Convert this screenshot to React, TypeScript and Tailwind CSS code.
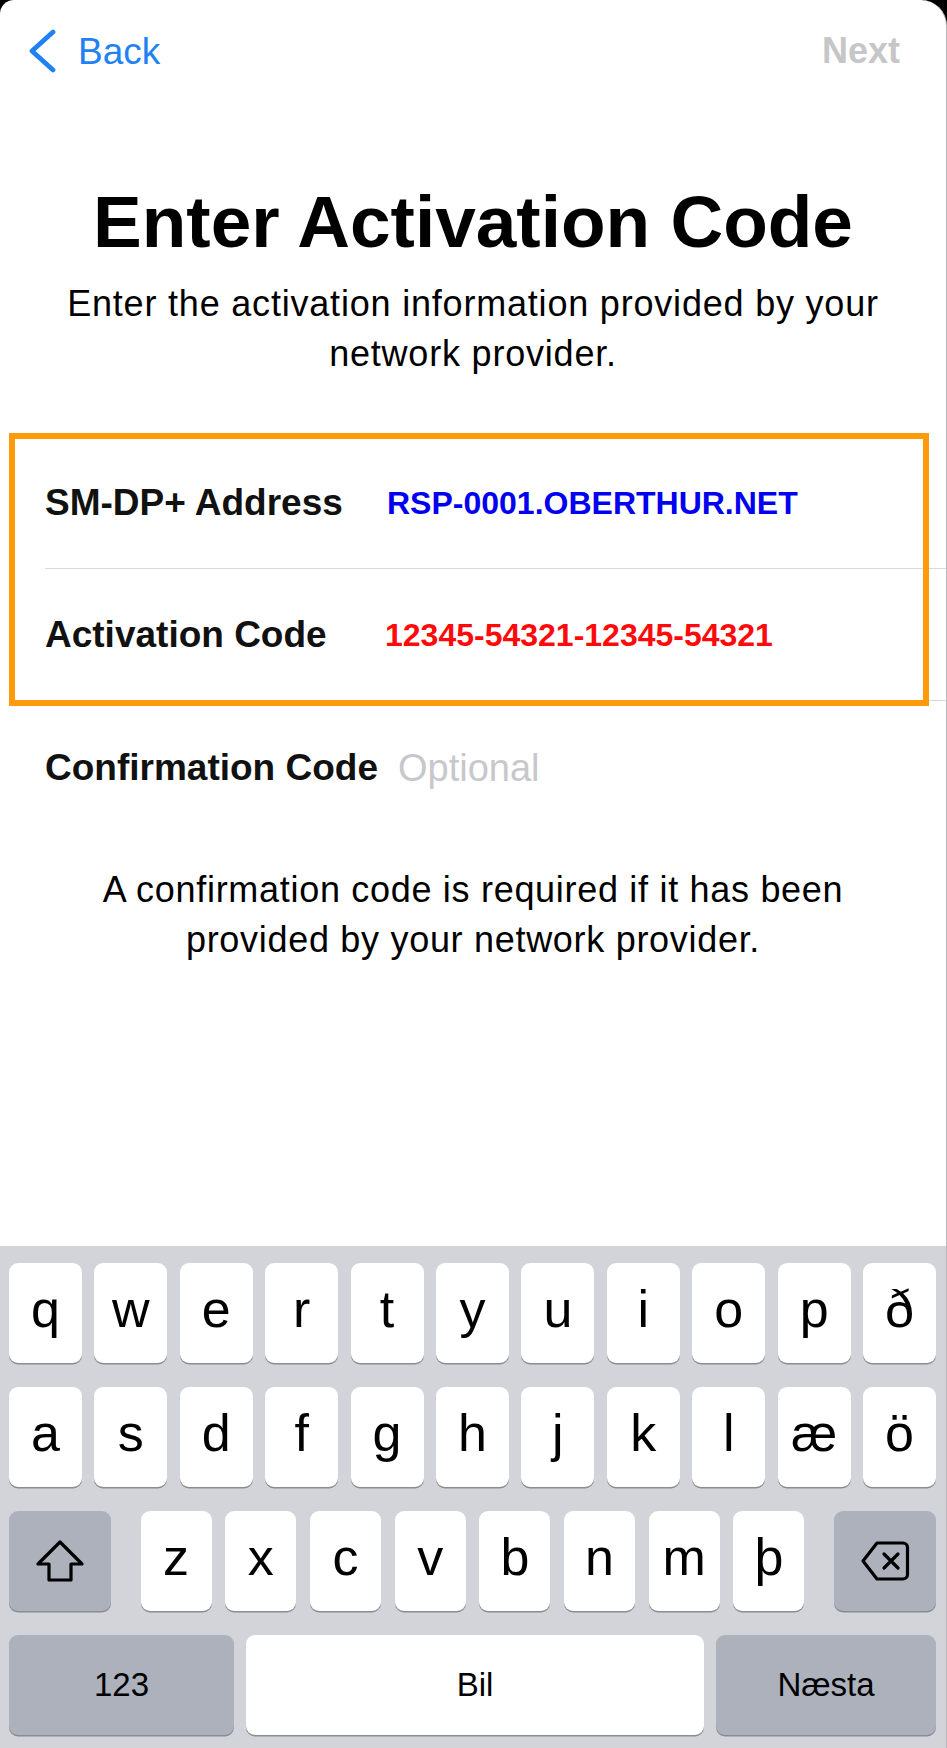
import React from "react";

const row1 = ["q", "w", "e", "r", "t", "y", "u", "i", "o", "p", "ð"];
const row2 = ["a", "s", "d", "f", "g", "h", "j", "k", "l", "æ", "ö"];
const row3 = ["z", "x", "c", "v", "b", "n", "m", "þ"];

const Key: React.FC<{ label: string; className?: string }> = ({ label, className = "" }) => (
  <div
    className={`h-[100px] rounded-[9px] bg-white shadow-[0_1.5px_0_#898c93] flex items-center justify-center pb-[8px] text-[52px] text-black ${className}`}
  >
    {label}
  </div>
);

const ShiftIcon = () => (
  <svg width="50" height="44" viewBox="0 0 50 44" fill="none">
    <path
      d="M25 3 L47 25 H36 V41 H14 V25 H3 Z"
      stroke="#000"
      strokeWidth="3.2"
      strokeLinejoin="round"
    />
  </svg>
);

const DeleteIcon = () => (
  <svg width="50" height="42" viewBox="0 0 50 42" fill="none">
    <path
      d="M17 3 H43 a4.5 4.5 0 0 1 4.5 4.5 V34.5 a4.5 4.5 0 0 1 -4.5 4.5 H17 L3 21 Z"
      stroke="#000"
      strokeWidth="3.2"
      strokeLinejoin="round"
    />
    <path d="M24 14 L38 28 M38 14 L24 28" stroke="#000" strokeWidth="3.2" strokeLinecap="round" />
  </svg>
);

export default function App() {
  return (
    <div className="w-[947px] h-[1748px] bg-black font-['Liberation_Sans',Arial,sans-serif]">
      <div className="h-full flex flex-col bg-white rounded-tl-[14px] rounded-tr-[26px] overflow-hidden border-r border-[#b9b9bb]">
        {/* form area */}
        <div className="relative h-[1246px] shrink-0">
          <div className="h-[102px] flex items-center justify-between pl-[29px] pr-[46px]">
            <div className="flex items-center gap-[22px] text-[#1f82f2]">
              <svg width="27" height="44" viewBox="0 0 27 44" fill="none">
                <path
                  d="M24 3 L3 22 L24 41"
                  stroke="#1f82f2"
                  strokeWidth="4.8"
                  strokeLinecap="round"
                  strokeLinejoin="round"
                />
              </svg>
              <span className="text-[37px] leading-none">Back</span>
            </div>
            <span className="text-[36px] font-bold leading-none text-[#c6c6c8]">Next</span>
          </div>

          <h1 className="mt-[78px] text-center text-[73px] leading-[84px] font-bold text-black">
            Enter Activation Code
          </h1>
          <p className="mt-[15px] text-center text-[36px] leading-[50px] tracking-[0.8px] text-black">
            Enter the activation information provided by your
            <br />
            network provider.
          </p>

          <div className="mt-[58px]">
            <div className="h-[131px] flex items-center pl-[45px]">
              <span className="w-[342px] text-[37px] font-bold text-[#111]">SM-DP+ Address</span>
              <span className="text-[32px] font-bold text-[#0000f0]">RSP-0001.OBERTHUR.NET</span>
            </div>
            <div className="ml-[45px] h-px bg-[#d9d9dd]" />
            <div className="h-[131px] flex items-center pl-[45px]">
              <span className="w-[340px] text-[37px] font-bold text-[#111]">Activation Code</span>
              <span className="text-[32px] font-bold text-[#ff0a0a]">12345-54321-12345-54321</span>
            </div>
            <div className="ml-[45px] h-px bg-[#d9d9dd]" />
            <div className="h-[134px] flex items-center pl-[45px] gap-[20px]">
              <span className="text-[37px] font-bold text-[#111]">Confirmation Code</span>
              <span className="text-[38px] text-[#c7c7cc]">Optional</span>
            </div>
          </div>

          <p className="mt-[30px] text-center text-[36px] leading-[50px] tracking-[0.7px] text-black">
            A confirmation code is required if it has been
            <br />
            provided by your network provider.
          </p>

          {/* annotation frame */}
          <div className="absolute left-[9px] top-[433px] w-[920px] h-[273px] border-[6px] border-[#ff9a0a]" />
        </div>

        {/* keyboard */}
        <div className="flex-1 bg-[#d2d4da] pt-[17px] pl-[9px] pr-[10px] flex flex-col gap-[24px]">
          <div className="flex gap-[12.5px]">
            {row1.map((k) => (
              <Key key={k} label={k} className="flex-1" />
            ))}
          </div>
          <div className="flex gap-[12.5px]">
            {row2.map((k) => (
              <Key key={k} label={k} className="flex-1" />
            ))}
          </div>
          <div className="flex justify-between">
            <div className="w-[102px] h-[100px] rounded-[9px] bg-[#acb1bc] shadow-[0_1.5px_0_#898c93] flex items-center justify-center">
              <ShiftIcon />
            </div>
            <div className="flex gap-[13.7px]">
              {row3.map((k) => (
                <Key key={k} label={k} className="w-[71px]" />
              ))}
            </div>
            <div className="w-[102px] h-[100px] rounded-[9px] bg-[#acb1bc] shadow-[0_1.5px_0_#898c93] flex items-center justify-center">
              <DeleteIcon />
            </div>
          </div>
          <div className="flex gap-[12px]">
            <div className="w-[225px] h-[100px] rounded-[9px] bg-[#acb1bc] shadow-[0_1.5px_0_#898c93] flex items-center justify-center text-[33px] text-black">
              123
            </div>
            <div className="flex-1 h-[100px] rounded-[9px] bg-white shadow-[0_1.5px_0_#898c93] flex items-center justify-center text-[33px] text-black">
              Bil
            </div>
            <div className="w-[220px] h-[100px] rounded-[9px] bg-[#acb1bc] shadow-[0_1.5px_0_#898c93] flex items-center justify-center text-[33px] text-black">
              Næsta
            </div>
          </div>
        </div>
      </div>
    </div>
  );
}
